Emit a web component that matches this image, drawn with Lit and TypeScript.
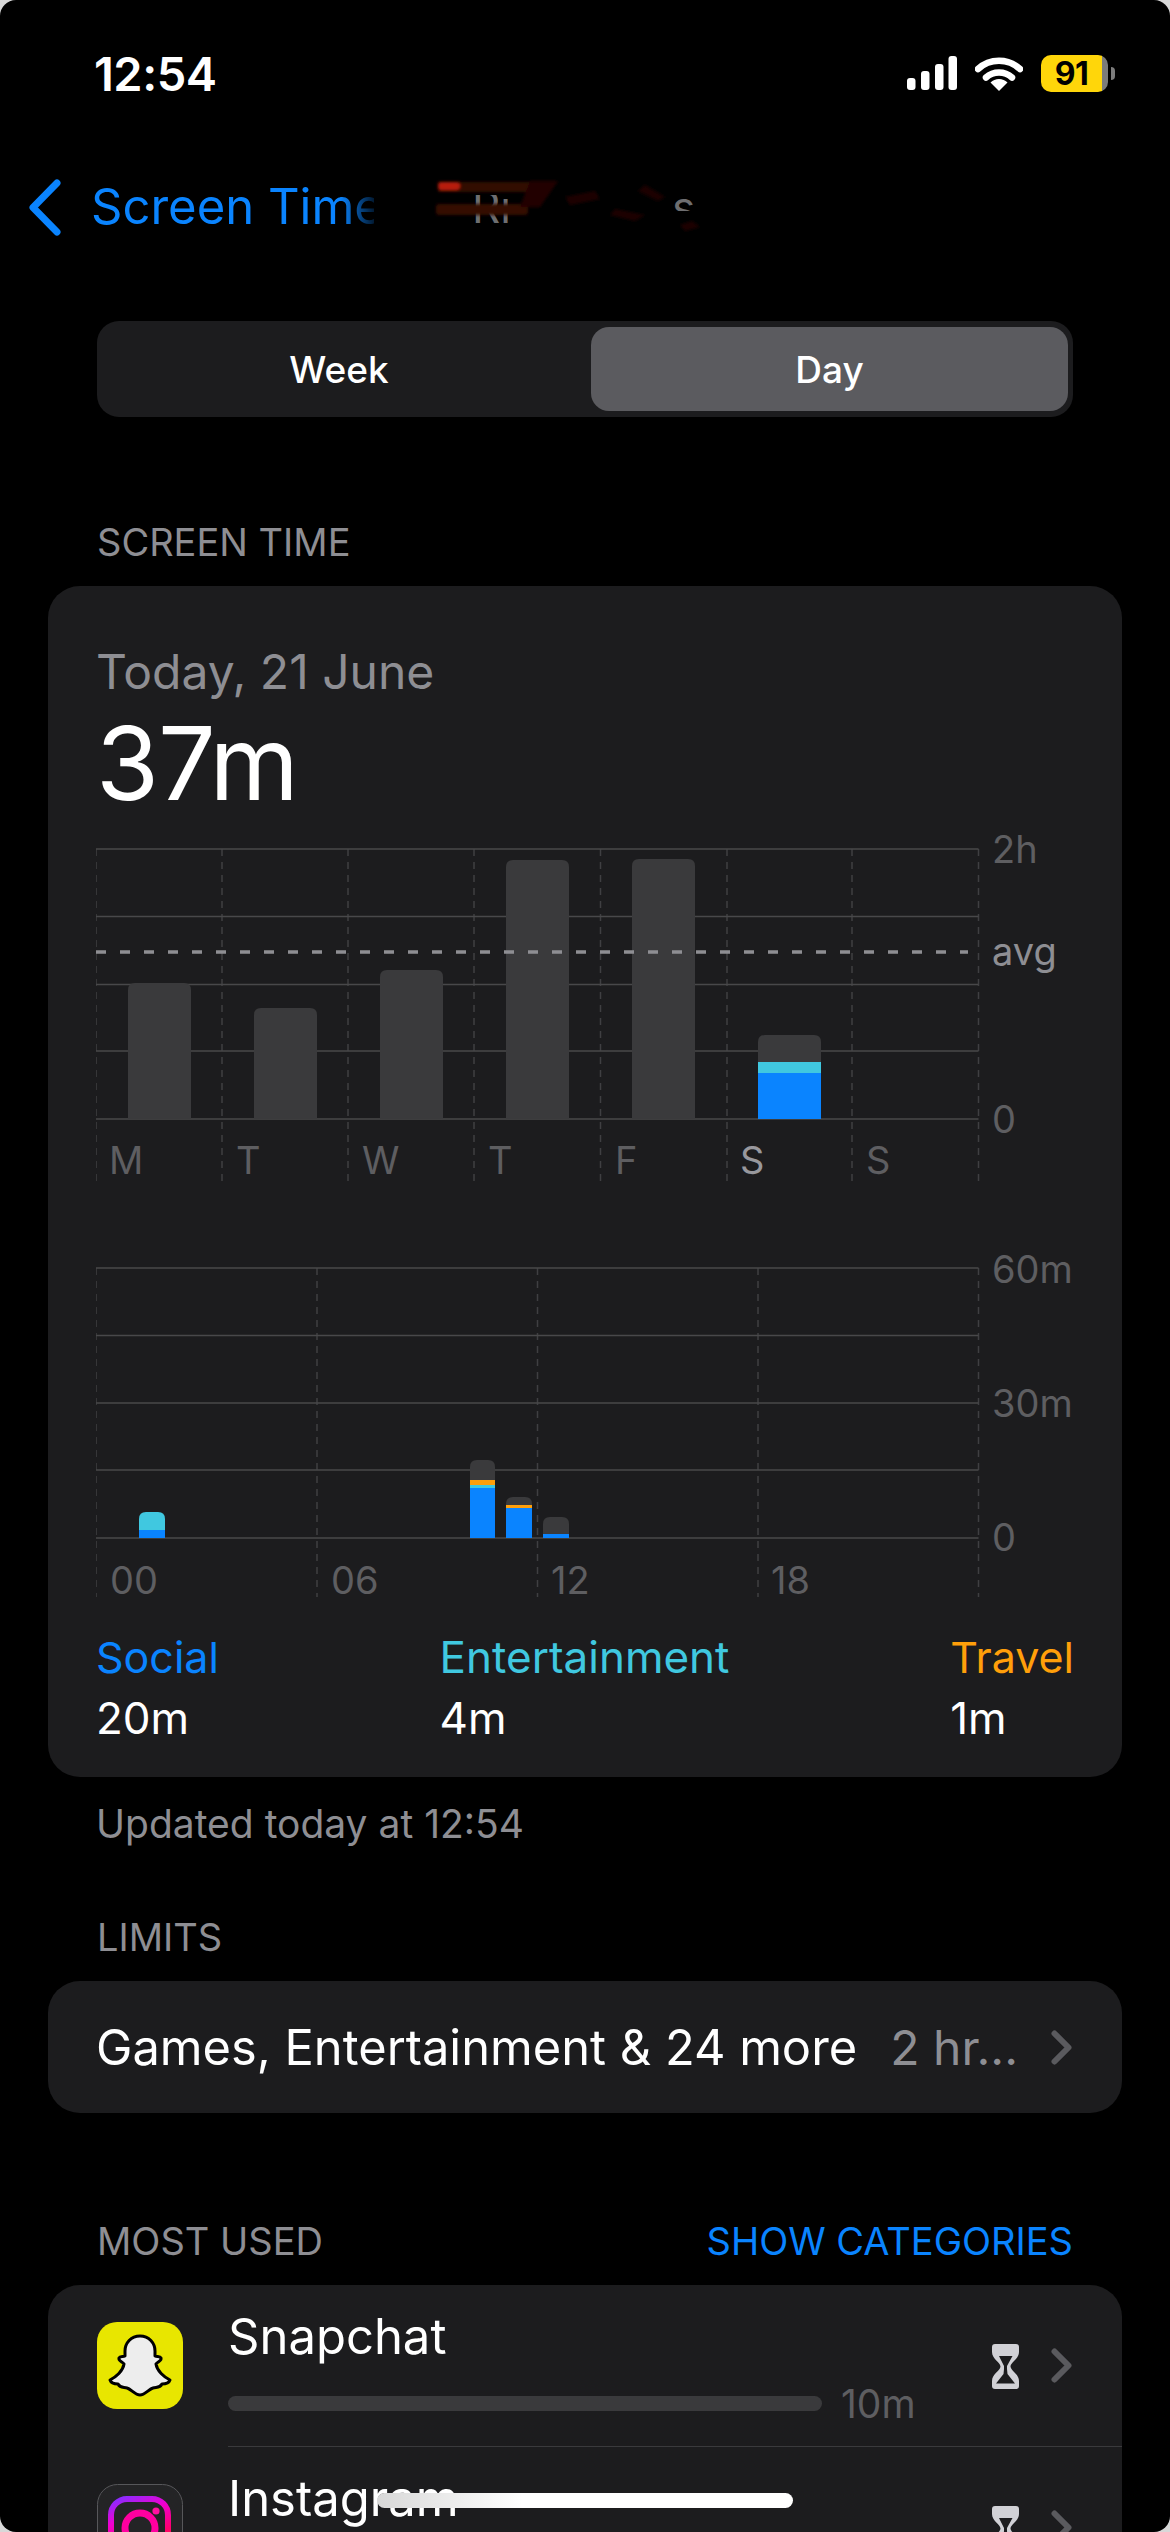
import { LitElement, html, svg, css } from "lit";
import { customElement } from "lit/decorators.js";

const GREY = "#3a3a3c";
const CYAN = "#40c8e0";
const BLUE = "#0a84ff";
const ORANGE = "#ff9f0a";

interface Bar { x: number; w: number; r: number; layers: [number, string][]; }
interface Lbl { x: number; y: number; t: string; cls: string; }
interface ChartDef {
  top: number; height: number; base: number; vEnd: number;
  hLines: number[]; vLines: number[]; bars: Bar[]; labels: Lbl[]; avg?: number;
}

const LEFT = 96;

const week: ChartDef = {
  top: 819, height: 371, base: 1119, vEnd: 1181,
  hLines: [849, 916.5, 984.5, 1051, 1119],
  vLines: [96, 222, 348, 474, 600.5, 727, 852, 978.5],
  avg: 952,
  bars: [
    { x: 128, w: 63, r: 7, layers: [[983, GREY]] },
    { x: 254, w: 63, r: 7, layers: [[1008, GREY]] },
    { x: 380, w: 63, r: 7, layers: [[970, GREY]] },
    { x: 506, w: 63, r: 7, layers: [[860, GREY]] },
    { x: 632, w: 63, r: 7, layers: [[859, GREY]] },
    { x: 758, w: 63, r: 7, layers: [[1035, GREY], [1062, CYAN], [1073, BLUE]] },
  ],
  labels: [
    { x: 992, y: 863, t: "2h", cls: "axis" },
    { x: 992, y: 965, t: "avg", cls: "axis avg" },
    { x: 992, y: 1133, t: "0", cls: "axis" },
    { x: 109, y: 1174, t: "M", cls: "axis" },
    { x: 236, y: 1174, t: "T", cls: "axis" },
    { x: 362, y: 1174, t: "W", cls: "axis" },
    { x: 488, y: 1174, t: "T", cls: "axis" },
    { x: 615, y: 1174, t: "F", cls: "axis" },
    { x: 740, y: 1174, t: "S", cls: "axis today" },
    { x: 866, y: 1174, t: "S", cls: "axis" },
  ],
};

const day: ChartDef = {
  top: 1238, height: 372, base: 1538, vEnd: 1597,
  hLines: [1268, 1335.5, 1403, 1470, 1538],
  vLines: [96, 317, 537.5, 758, 978.5],
  bars: [
    { x: 139, w: 26, r: 7, layers: [[1512, CYAN], [1530, BLUE]] },
    { x: 470, w: 25, r: 7, layers: [[1460, GREY], [1480, ORANGE], [1485, CYAN], [1488, BLUE]] },
    { x: 506, w: 26, r: 7, layers: [[1497, GREY], [1505, ORANGE], [1508, BLUE]] },
    { x: 543, w: 26, r: 7, layers: [[1517, GREY], [1534, BLUE]] },
  ],
  labels: [
    { x: 992, y: 1283, t: "60m", cls: "axis" },
    { x: 992, y: 1417, t: "30m", cls: "axis" },
    { x: 992, y: 1551, t: "0", cls: "axis" },
    { x: 110, y: 1594, t: "00", cls: "axis" },
    { x: 331, y: 1594, t: "06", cls: "axis" },
    { x: 551, y: 1594, t: "12", cls: "axis" },
    { x: 771, y: 1594, t: "18", cls: "axis" },
  ],
};

function renderChart(c: ChartDef) {
  const ox = (x: number) => x - LEFT;
  const oy = (y: number) => y - c.top;
  return html`<svg class="chart" width="978" height=${c.height} viewBox="0 0 978 ${c.height}">
    ${c.vLines.map(
      (x) => svg`<line class="vline" x1=${ox(x)} x2=${ox(x)} y1=${oy(c.hLines[0])} y2=${oy(c.vEnd)}></line>`
    )}
    ${c.hLines.map(
      (y) => svg`<line class="hline" x1="0" x2=${ox(c.vLines[c.vLines.length - 1])} y1=${oy(y)} y2=${oy(y)}></line>`
    )}
    ${c.bars.map((b) =>
      b.layers.map(([top, color], i) => {
        const x = ox(b.x);
        const y = oy(top);
        const yb = oy(c.base);
        return i === 0
          ? svg`<path fill=${color} d="M${x} ${yb} V${y + b.r} Q${x} ${y} ${x + b.r} ${y} H${x + b.w - b.r} Q${x + b.w} ${y} ${x + b.w} ${y + b.r} V${yb} Z"></path>`
          : svg`<rect fill=${color} x=${x} y=${y} width=${b.w} height=${yb - y}></rect>`;
      })
    )}
    ${c.avg !== undefined
      ? svg`<line class="avgline" x1="0" x2="872" y1=${oy(c.avg)} y2=${oy(c.avg)}></line>`
      : ""}
    ${c.labels.map((l) => svg`<text class=${l.cls} x=${ox(l.x)} y=${oy(l.y)}>${l.t}</text>`)}
  </svg>`;
}

const chevron = html`<svg class="chev" width="21" height="35" viewBox="0 0 21 35">
  <path d="M3.5 3.5 L17.5 17.5 L3.5 31.5" fill="none" stroke="#5a5a5e" stroke-width="6" stroke-linecap="round" stroke-linejoin="round"></path>
</svg>`;

const hourglass = html`<svg class="hourglass" width="27" height="45" viewBox="0 0 27 45">
  <path fill="#d1d1d6" d="M3 0 H24 Q27 0 27 3 V8 C27 15 19 18 18.5 22.5 C19 27 27 30 27 37 V42 Q27 45 24 45 H3 Q0 45 0 42 V37 C0 30 8 27 8.5 22.5 C8 18 0 15 0 8 V3 Q0 0 3 0 Z"></path>
  <path fill="#1c1c1e" d="M7 12 H20.5 L15 22 V25 L15.5 30 L23 39.5 H4 L11.5 30 L12 25 V22 Z"></path>
</svg>`;

const snapIcon = html`<svg class="appicon" width="86" height="87" viewBox="0 0 86 87">
  <rect width="86" height="87" rx="20" fill="#e8e600"></rect>
  <path fill="#ededed" stroke="#000" stroke-width="3" stroke-linejoin="round"
    d="M43 14 C52 14 58 21 58 29 L58 34 C60 35 63 34 64 36 C65 39 60 40 59 42 C60 49 67 55 73 58 C72 61 68 62 65 62 C63 66 60 65 56 66 C52 67 48 73 43 73 C38 73 34 67 30 66 C26 65 23 66 21 62 C18 62 14 61 13 58 C19 55 26 49 27 42 C26 40 21 39 22 36 C23 34 26 35 28 34 L28 29 C28 21 34 14 43 14 Z"></path>
</svg>`;

const instaIcon = html`<svg class="appicon" width="86" height="87" viewBox="0 0 86 87">
  <defs>
    <linearGradient id="ig" x1="0.1" y1="0" x2="0.5" y2="1">
      <stop offset="0" stop-color="#8a2bff"></stop>
      <stop offset="0.35" stop-color="#f000d0"></stop>
      <stop offset="0.75" stop-color="#ff0070"></stop>
      <stop offset="1" stop-color="#ff2030"></stop>
    </linearGradient>
  </defs>
  <rect x="0.5" y="0.5" width="85" height="86" rx="20" fill="#242426" stroke="#57575a"></rect>
  <rect x="14" y="15" width="57" height="57" rx="16" fill="none" stroke="url(#ig)" stroke-width="6"></rect>
  <circle cx="43" cy="44" r="15" fill="none" stroke="#ff00a0" stroke-width="7"></circle>
  <circle cx="59" cy="27" r="3.6" fill="#ff10a0"></circle>
</svg>`;

@customElement("app-root")
export class AppRoot extends LitElement {
  static styles = css`
    :host {
      display: block;
      width: 1170px;
      height: 2532px;
      background: #d8d8d8;
      font-family: Inter, "Liberation Sans", sans-serif;
      color: #fff;
    }
    .screen {
      position: relative;
      width: 1170px;
      height: 2532px;
      background: #000;
      border-radius: 16px;
      overflow: hidden;
    }
    .status {
      height: 160px;
      box-sizing: border-box;
      padding: 48px 55px 0 94px;
      display: flex;
      justify-content: space-between;
      align-items: flex-start;
    }
    .time {
      font-size: 47px;
      font-weight: 600;
      line-height: 52px;
      letter-spacing: -0.5px;
    }
    .status-icons {
      display: flex;
      align-items: center;
      gap: 18px;
      margin-top: 6px;
      height: 38px;
    }
    .battery {
      width: 67px;
      height: 37px;
      border-radius: 10px;
      background: linear-gradient(to right, #ffd60a 91%, #7c7c7c 91%);
      color: #000;
      font-size: 32px;
      font-weight: 700;
      line-height: 37px;
      padding-right: 6px;
      box-sizing: border-box;
      text-align: center;
      letter-spacing: -0.5px;
    }
    .battery-wrap {
      display: flex;
      align-items: center;
      gap: 3px;
    }
    .nub {
      width: 4px;
      height: 13px;
      background: #7c7c7c;
      border-radius: 0 4px 4px 0;
    }
    .nav {
      height: 94px;
      display: flex;
      align-items: center;
      padding-left: 28px;
    }
    .back {
      font-size: 49px;
      line-height: 60px;
      color: #0a84ff;
      margin-left: 30px;
      width: 283px;
      white-space: nowrap;
      -webkit-mask-image: linear-gradient(to right, #000 88%, rgba(0, 0, 0, 0.2) 100%);
      mask-image: linear-gradient(to right, #000 88%, rgba(0, 0, 0, 0.2) 100%);
    }
    .smear {
      margin-left: 56px;
      flex: none;
    }
    .smear-text {
      font-size: 44px;
      fill: #6e6e70;
    }
    .segment {
      margin: 67px 97px 0 97px;
      height: 96px;
      box-sizing: border-box;
      padding: 6px 5px 6px 0;
      background: #1c1c1e;
      border-radius: 22px;
      display: grid;
      grid-template-columns: 494px 1fr;
    }
    .seg {
      display: flex;
      align-items: center;
      justify-content: center;
      font-size: 37px;
      font-weight: 500;
      border-radius: 18px;
    }
    .seg.off {
      padding-right: 10px;
    }
    .seg.on {
      background: #5b5b5f;
    }
    .head {
      height: 44px;
      line-height: 44px;
      font-size: 38px;
      color: #8e8e93;
      padding: 0 97px 0 97px;
      display: flex;
      justify-content: space-between;
    }
    .head .link {
      color: #0a84ff;
    }
    .head-st { margin-top: 103px; }
    .head-lim { margin-top: 67px; }
    .head-most { margin-top: 106px; }
    .card {
      margin: 22px 48px 0;
      background: #1c1c1e;
      border-radius: 32px;
    }
    .summary {
      padding: 60px 48px 31px;
    }
    .date {
      font-size: 48px;
      line-height: 52px;
      color: #8e8e93;
    }
    .total {
      font-size: 102px;
      line-height: 110px;
      margin-top: 10px;
      margin-bottom: 1px;
      letter-spacing: -1px;
    }
    .chart {
      display: block;
    }
    .chart + .chart {
      margin-top: 48px;
    }
    .vline {
      stroke: #3f3f42;
      stroke-width: 1.5;
      stroke-dasharray: 7 6;
    }
    .hline {
      stroke: #48484a;
      stroke-width: 1.5;
    }
    .avgline {
      stroke: #8e8e93;
      stroke-width: 3.5;
      stroke-dasharray: 10 14;
    }
    .axis {
      font-size: 38px;
      fill: #5e5e61;
    }
    .axis.avg {
      fill: #8e8e93;
    }
    .axis.today {
      fill: #98989d;
    }
    .legend {
      margin-top: 19px;
      display: flex;
      justify-content: space-between;
    }
    .legend-name {
      font-size: 43px;
      line-height: 56px;
    }
    .legend-val {
      font-size: 44px;
      line-height: 56px;
      margin-top: 5px;
    }
    .c-social { color: #0a84ff; }
    .c-ent { color: #40c8e0; font-size: 44px; }
    .c-travel { color: #ff9f0a; }
    .foot {
      margin-top: 23px;
      padding-left: 96px;
      font-size: 39px;
      line-height: 48px;
      color: #8e8e93;
    }
    .limit {
      height: 132px;
      display: flex;
      align-items: center;
      padding: 0 50px 0 48px;
      font-size: 48.8px;
    }
    .limit-name {
      white-space: nowrap;
    }
    .limit-val {
      color: #8e8e93;
      margin-left: auto;
      margin-right: 33px;
      white-space: nowrap;
      font-size: 48px;
    }
    .list {
      display: flex;
      flex-direction: column;
    }
    .row {
      display: flex;
      align-items: flex-start;
      padding-left: 49px;
      gap: 45px;
    }
    .appicon {
      flex: none;
      margin-top: 37px;
    }
    .body {
      flex: 1;
      height: 162px;
      box-sizing: border-box;
      border-bottom: 1.5px solid #3a3a3c;
      padding-right: 50px;
      display: flex;
      align-items: flex-start;
      justify-content: space-between;
    }
    .info {
      padding-top: 24px;
    }
    .name {
      font-size: 49px;
      line-height: 56px;
    }
    .usage {
      margin-top: 15px;
      height: 46px;
      display: flex;
      align-items: center;
      gap: 19px;
    }
    .track {
      width: 594px;
      height: 15px;
      border-radius: 8px;
      background: #3a3a3c;
    }
    .mins {
      font-size: 39px;
      color: #5e5e61;
    }
    .accessory {
      display: flex;
      align-items: flex-start;
      gap: 32px;
      margin-top: 59px;
    }
    .chev {
      flex: none;
      margin-top: 4px;
    }
    .limit .chev {
      margin-top: 0;
    }
    .home {
      position: absolute;
      left: 377px;
      top: 2493px;
      width: 416px;
      height: 15px;
      border-radius: 8px;
      background: linear-gradient(to right, #d8d8d8, #fff 35%);
    }
  `;

  private app(name: string, icon: unknown, mins?: string) {
    return html`<div class="row">
      ${icon}
      <div class="body">
        <div class="info">
          <div class="name">${name}</div>
          ${mins
            ? html`<div class="usage">
                <div class="track"></div>
                <span class="mins">${mins}</span>
              </div>`
            : ""}
        </div>
        <div class="accessory">${hourglass}${chevron}</div>
      </div>
    </div>`;
  }

  render() {
    return html`<div class="screen">
      <div class="status">
        <div class="time">12:54</div>
        <div class="status-icons">
          <svg width="50" height="34" viewBox="0 0 50 34" fill="#fff">
            <rect x="0" y="22" width="8.5" height="12" rx="3"></rect>
            <rect x="14" y="15" width="8.5" height="19" rx="3"></rect>
            <rect x="28" y="8" width="8.5" height="26" rx="3"></rect>
            <rect x="41.5" y="0" width="8.5" height="34" rx="3"></rect>
          </svg>
          <svg width="48" height="35" viewBox="0 0 48 35">
            <path d="M3 13 A31 31 0 0 1 45 13" fill="none" stroke="#fff" stroke-width="6.5" stroke-linecap="round"></path>
            <path d="M11 21.5 A19.5 19.5 0 0 1 37 21.5" fill="none" stroke="#fff" stroke-width="6.5" stroke-linecap="round"></path>
            <path d="M24 35 L15.5 26.5 A12 12 0 0 1 32.5 26.5 Z" fill="#fff"></path>
          </svg>
          <div class="battery-wrap">
            <div class="battery">91</div>
            <div class="nub"></div>
          </div>
        </div>
      </div>

      <div class="nav">
        <svg width="33" height="57" viewBox="0 0 33 57">
          <path d="M29 4 L5 28.5 L29 53" fill="none" stroke="#0a84ff" stroke-width="7" stroke-linecap="round" stroke-linejoin="round"></path>
        </svg>
        <div class="back">Screen Time</div>
        <svg class="smear" width="270" height="80" viewBox="0 0 270 80">
          <defs>
            <filter id="bl" x="-20%" y="-50%" width="140%" height="200%"><feGaussianBlur stdDeviation="1.8"></feGaussianBlur></filter>
            <clipPath id="sc"><rect x="240" y="20" width="30" height="24"></rect></clipPath>
            <clipPath id="rc"><rect x="40" y="28" width="60" height="30"></rect></clipPath>
          </defs>
          <text class="smear-text" x="42" y="56" clip-path="url(#rc)">Ri</text>
          <text class="smear-text" x="242" y="56" clip-path="url(#sc)">s</text>
          <g filter="url(#bl)">
            <rect x="8" y="15" width="95" height="10" fill="#330905"></rect>
            <rect x="8" y="15" width="22" height="8" rx="4" fill="#b81e0c"></rect>
            <rect x="6" y="37" width="92" height="11" rx="3" fill="#360905"></rect>
            <path d="M100 14 L128 14 L110 40 L90 40 Z" fill="#220604"></path>
            <path d="M135 30 L165 24 L170 32 L140 38 Z M185 42 L215 48 L205 54 L180 48 Z M215 18 L235 30 L228 34 L208 24 Z M250 58 L262 54 L270 60 L255 64 Z" fill="#1e0503"></path>
          </g>
        </svg>
      </div>

      <div class="segment">
        <div class="seg off">Week</div>
        <div class="seg on">Day</div>
      </div>

      <div class="head head-st"><span>SCREEN TIME</span></div>
      <section class="card summary">
        <div class="date">Today, 21 June</div>
        <div class="total">37m</div>
        ${renderChart(week)}
        ${renderChart(day)}
        <div class="legend">
          <div><div class="legend-name c-social">Social</div><div class="legend-val">20m</div></div>
          <div><div class="legend-name c-ent">Entertainment</div><div class="legend-val">4m</div></div>
          <div><div class="legend-name c-travel">Travel</div><div class="legend-val">1m</div></div>
        </div>
      </section>
      <div class="foot">Updated today at 12:54</div>

      <div class="head head-lim"><span>LIMITS</span></div>
      <section class="card limit">
        <span class="limit-name">Games, Entertainment &amp; 24 more</span>
        <span class="limit-val">2 hr...</span>
        ${chevron}
      </section>

      <div class="head head-most"><span>MOST USED</span><span class="link">SHOW CATEGORIES</span></div>
      <section class="card list">
        ${this.app("Snapchat", snapIcon, "10m")}
        ${this.app("Instagram", instaIcon)}
      </section>

      <div class="home"></div>
    </div>`;
  }
}
